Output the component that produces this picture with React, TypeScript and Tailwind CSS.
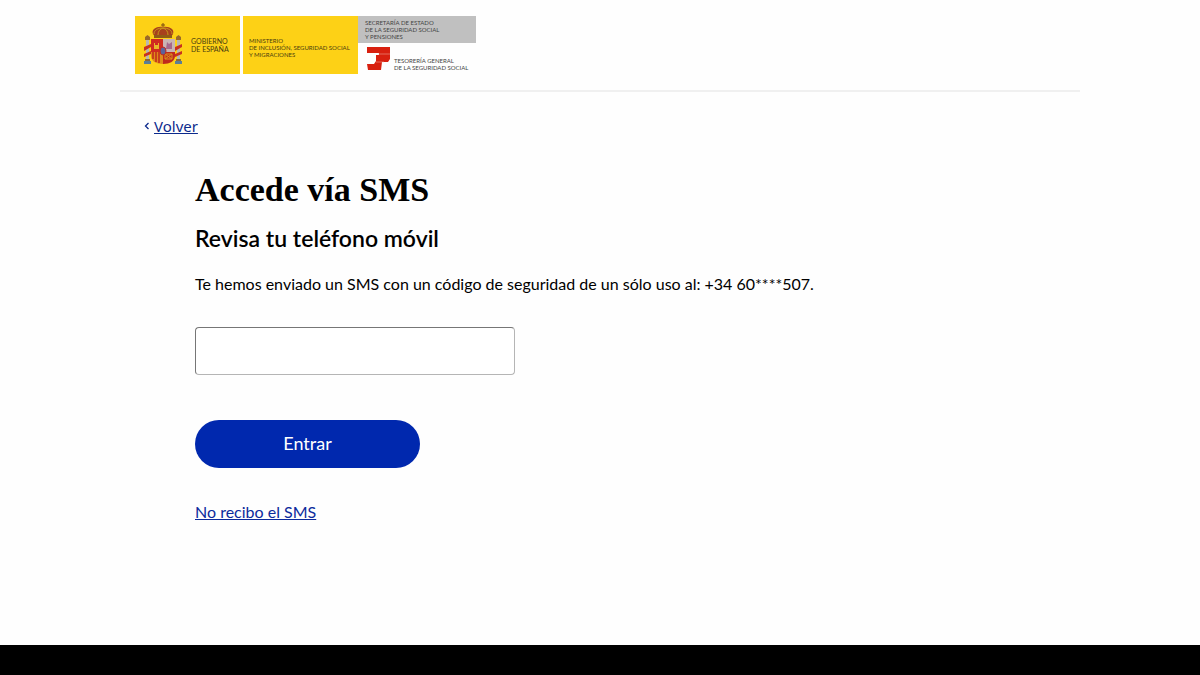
import React, { useState } from 'react';

const SpainEmblem = () => (
  <svg viewBox="0 0 40 44" className="h-11 w-10 shrink-0" aria-hidden="true">
    {/* pillars */}
    {[2, 33].map((x) => (
      <g key={x}>
        <path d={`M${x} 14l2.500-2 2.500 2v3h-5z`} fill="#9a6a2a" />
        <rect x={x + 1} y="17" width="3" height="19" fill="#b9b7b0" />
        <path d={`M${x - 1} 24l7-3v3l-7 4z`} fill="#c8321f" />
        <path d={`M${x - 1} 31l7-3v3l-7 3z`} fill="#c8321f" />
        <rect x={x} y="36" width="5" height="2" fill="#8b6a3a" />
        <rect x={x - 1} y="38" width="7" height="3" fill="#5c7f96" />
      </g>
    ))}
    {/* crown */}
    <path d="M20 0v4M18 2h4" stroke="#7a4a12" strokeWidth="1" />
    <path d="M10 11C8 6 14 3 20 4c6-1 12 2 10 7l-2 3H12z" fill="#a8401d" />
    <path d="M11 11c0-4 4-6 9-6s9 2 9 6M15 12c0-4 2-6 5-7M25 12c0-4-2-6-5-7" fill="none" stroke="#c79a1c" strokeWidth="1" />
    <path d="M11 12h18v3H11z" fill="#8f5b16" />
    {/* shield */}
    <path d="M8 16h12v13H8z" fill="#d02a20" />
    <path d="M20 16h12v13H20z" fill="#c9b4b4" />
    <path d="M8 29h12v12c-7 0-12-3-12-8z" fill="#e08a1b" />
    <path d="M20 29h12v4c0 5-5 8-12 8z" fill="#c02a1d" />
    <path d="M11 26v-6h1v2h3v-2h1v6z" fill="#e8b52a" />
    <path d="M23 26l1-7 2 2 3-2v7z" fill="#a5688c" />
    <path d="M10 29v7M13 29v10M16 29v11" stroke="#c02a1d" strokeWidth="1.500" />
    <path d="M22 31h7v5h-7zM22 31l7 5M29 31l-7 5" fill="none" stroke="#d9921b" strokeWidth="1" />
    <ellipse cx="20" cy="28" rx="3" ry="4" fill="#5b639c" stroke="#c02a1d" />
  </svg>
);

const TreasuryLogo = () => (
  <svg viewBox="0 0 26 24" className="h-6 w-[26px] shrink-0" aria-hidden="true">
    <path d="M1 0h23v12l-2 3h-6l-1 8H2l-1-6h7l2-3V8h3V6H1z" fill="#d8200f" />
    <path d="M12 7h12M10 15h8" stroke="#f3b5a8" strokeWidth="0.500" />
  </svg>
);

const Header = () => (
  <header className="flex border-b-2 border-[#f0f0f0] px-[15px] py-4 font-['Lato',sans-serif] text-[6px] leading-[7px] text-[#4a3c10]">
    <div className="flex h-[58px] w-[105px] items-center gap-2 bg-[#fdd116] pl-2 text-[7px] leading-2">
      <SpainEmblem />
      <p>GOBIERNO<br />DE ESPAÑA</p>
    </div>
    <div className="ml-[3px] flex h-[58px] w-[115px] items-center bg-[#fdd116] pt-1 pl-1.5 whitespace-nowrap">
      <p>MINISTERIO<br />DE INCLUSIÓN, SEGURIDAD SOCIAL<br />Y MIGRACIONES</p>
    </div>
    <div className="flex w-[118px] flex-col whitespace-nowrap text-[#444]">
      <p className="bg-[#c0c0c0] py-[3px] pl-[7px]">
        SECRETARÍA DE ESTADO<br />DE LA SEGURIDAD SOCIAL<br />Y PENSIONES
      </p>
      <div className="flex gap-0.5 pt-1 pl-2">
        <TreasuryLogo />
        <p className="pt-2.5">TESORERÍA GENERAL<br />DE LA SEGURIDAD SOCIAL</p>
      </div>
    </div>
  </header>
);

const App = () => {
  const [code, setCode] = useState('');

  return (
    <div className="flex min-h-screen flex-col bg-[#fefefe] font-['Lato',sans-serif] text-black">
      <div className="mx-auto w-full max-w-[960px] flex-1">
        <Header />
        <nav className="flex items-center gap-1 px-6 pt-[22px] font-['Noto_Sans',sans-serif] text-[15px] leading-6 text-[#0c2a8c]">
          <svg viewBox="0 0 6 8" className="h-2 w-1.5" aria-hidden="true">
            <path d="M4.500 1L1.500 4l3 3" fill="none" stroke="currentColor" strokeWidth="1.300" />
          </svg>
          <a href="#volver" className="underline">Volver</a>
        </nav>
        <main className="px-[75px] pt-8">
          <h1 className="font-['Liberation_Serif',serif] text-[34px] leading-10 font-bold">Accede vía SMS</h1>
          <h2 className="mt-3 text-[23px] leading-8 font-semibold">Revisa tu teléfono móvil</h2>
          <form onSubmit={(e) => e.preventDefault()}>
            <label htmlFor="code" className="mt-[18px] block text-base leading-6">
              Te hemos enviado un SMS con un código de seguridad de un sólo uso al: +34 60****507.
            </label>
            <input
              id="code"
              type="text"
              inputMode="numeric"
              autoComplete="one-time-code"
              value={code}
              onChange={(e) => setCode(e.target.value)}
              className="mt-[31px] block h-12 w-full max-w-80 rounded border border-t-[#767676] border-r-[#b5b5b5] border-b-[#b5b5b5] border-l-[#767676] bg-white px-3 text-lg"
            />
            <button type="submit" className="mt-[45px] block h-12 w-[225px] rounded-full bg-[#0028ae] pb-0.5 text-lg text-white">
              Entrar
            </button>
          </form>
          <a href="#ayuda" className="mt-8 inline-block text-base leading-6 text-[#0c2a9c] underline">No recibo el SMS</a>
        </main>
      </div>
      <footer className="h-[30px] bg-black" />
    </div>
  );
};

export default App;
